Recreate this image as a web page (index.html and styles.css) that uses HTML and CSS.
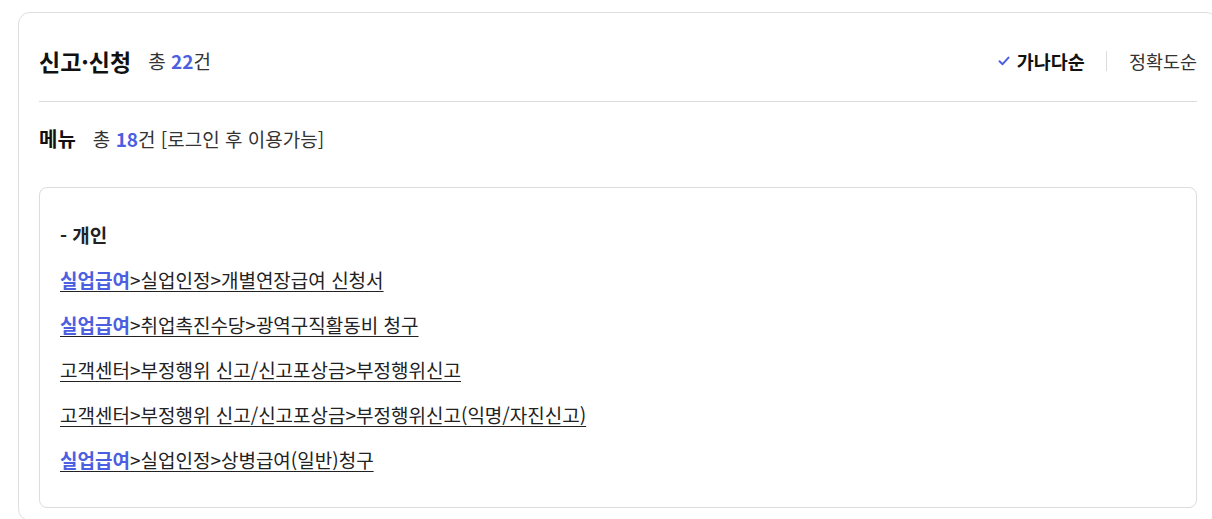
FILE: index.html
```html
<!DOCTYPE html>
<html lang="ko">
<head>
<meta charset="utf-8">
<link rel="stylesheet" href="styles.css">
</head>
<body>
<section class="card">
  <header class="head">
    <div class="head-left">
      <h2 class="title">신고·신청</h2>
      <span class="count">총 <b class="num">22</b>건</span>
    </div>
    <div class="sort">
      <a class="sort-item active">
        <svg class="check" width="12" height="10" viewBox="0 0 12 10"><path d="M1.5 5.2 L4.6 8.2 L10.5 1.6" fill="none" stroke="#4b5fe0" stroke-width="2" stroke-linecap="round" stroke-linejoin="round"/></svg>
        가나다순
      </a>
      <span class="sep"></span>
      <a class="sort-item">정확도순</a>
    </div>
  </header>
  <div class="sub">
    <h3 class="sub-title">메뉴</h3>
    <span class="count">총 <b class="num">18</b>건 [로그인 후 이용가능]</span>
  </div>
  <div class="box">
    <p class="group">- 개인</p>
    <ul class="links">
      <li><a><span class="hl">실업급여</span>&gt;실업인정&gt;개별연장급여 신청서</a></li>
      <li><a><span class="hl">실업급여</span>&gt;취업촉진수당&gt;광역구직활동비 청구</a></li>
      <li><a>고객센터&gt;부정행위 신고/신고포상금&gt;부정행위신고</a></li>
      <li><a>고객센터&gt;부정행위 신고/신고포상금&gt;부정행위신고(익명/자진신고)</a></li>
      <li><a><span class="hl">실업급여</span>&gt;실업인정&gt;상병급여(일반)청구</a></li>
    </ul>
  </div>
</section>
</body>
</html>
```

FILE: styles.css
```css
* { box-sizing: border-box; }
html, body { margin: 0; background: #fff; }
body {
  padding: 12px 0 0 18px;
  font-family: "Noto Sans CJK KR", "Noto Sans", sans-serif;
  color: #222;
  overflow: hidden;
}
.card {
  width: 1200px;
  border: 1px solid #dedede;
  border-radius: 12px;
  padding: 33px 0 12px 20px;
  margin-right: -100px;
}
.card > * { width: 1158px; }
.head {
  display: flex;
  justify-content: space-between;
  align-items: center;
  padding-bottom: 25px;
  border-bottom: 1px solid #dcdcdc;
  height: 56px;
}
.head-left { display: flex; align-items: center; gap: 17px; }
.title {
  margin: 0;
  font-size: 23px;
  font-weight: 700;
  line-height: 30px;
  color: #111;
}
.count { font-size: 19px; color: #333; line-height: 24px; }
.num { color: #4b5fe0; font-weight: 700; }
.sort { display: flex; align-items: center; }
.sort-item { font-size: 18.5px; color: #333; line-height: 24px; display: flex; align-items: center; gap: 7px; }
.sort-item.active { font-weight: 700; color: #111; }
.check { display: block; }
.sep { width: 1px; height: 20px; background: #dcdcdc; margin: 0 22px 0 21px; }
.sub {
  display: flex;
  align-items: center;
  gap: 17px;
  margin-top: 24px;
  height: 26px;
}
.sub-title { margin: 0; font-size: 20px; font-weight: 700; line-height: 26px; color: #111; }
.box {
  margin-top: 35px;
  border: 1px solid #dcdcdc;
  border-radius: 8px;
  padding: 35px 20px 35px 20px;
}
.group { margin: 0; font-size: 19px; font-weight: 700; line-height: 24px; color: #222; }
.links { list-style: none; margin: 21px 0 0; padding: 0; display: flex; flex-direction: column; gap: 21px; }
.links li { line-height: 24px; font-size: 19px; }
.links a { color: #222; text-decoration: underline; text-underline-offset: 3px; text-decoration-thickness: 1px; }
.hl { color: #4b5fe0; font-weight: 700; }
```
